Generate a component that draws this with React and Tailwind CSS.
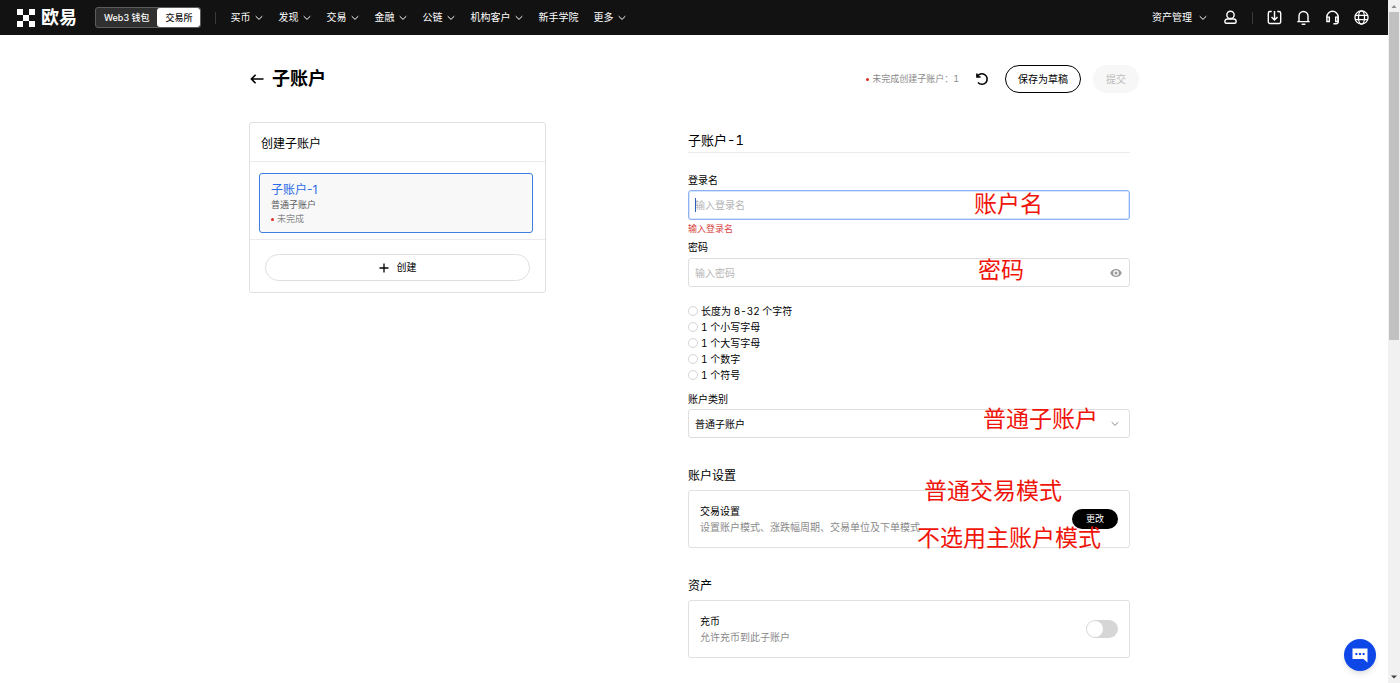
import React, { useState } from 'react'
import { clsx } from 'clsx'

const NAV_ITEMS = [
  { label: '买币', menu: true },
  { label: '发现', menu: true },
  { label: '交易', menu: true },
  { label: '金融', menu: true },
  { label: '公链', menu: true },
  { label: '机构客户', menu: true },
  { label: '新手学院', menu: false },
  { label: '更多', menu: true },
]

const PASSWORD_RULES = [
  { label: '长度为 8-32 个字符', test: v => v.length >= 8 && v.length <= 32 },
  { label: '1 个小写字母', test: v => /[a-z]/.test(v) },
  { label: '1 个大写字母', test: v => /[A-Z]/.test(v) },
  { label: '1 个数字', test: v => /\d/.test(v) },
  { label: '1 个符号', test: v => /[^a-zA-Z0-9]/.test(v) },
]

function Icon({ size = 16, children, className, strokeWidth = 1.5 }) {
  return (
    <svg
      width={size}
      height={size}
      viewBox="0 0 16 16"
      fill="none"
      stroke="currentColor"
      strokeWidth={strokeWidth}
      className={clsx('shrink-0', className)}
      aria-hidden="true"
    >
      {children}
    </svg>
  )
}

function Chevron({ className }) {
  return (
    <svg width="8" height="8" viewBox="0 0 8 8" fill="none" stroke="currentColor" className={clsx('shrink-0', className)} aria-hidden="true">
      <path d="M0.7 2.2 L4 5.4 L7.3 2.2" />
    </svg>
  )
}

function Note({ className, children }) {
  return (
    <span className={clsx('absolute z-10 text-[23px] leading-6 text-[#f0150a] whitespace-nowrap pointer-events-none', className)}>
      {children}
    </span>
  )
}

function Logo() {
  return (
    <a href="#" className="flex items-center gap-1.5 text-white">
      <svg width="18" height="18" viewBox="0 0 18 18" fill="currentColor" aria-hidden="true">
        <path d="M0 0h6v6H0zM12 0h6v6h-6zM6 6h6v6H6zM0 12h6v6H0zM12 12h6v6h-6z" />
      </svg>
      <span className="text-lg leading-5 font-bold">欧易</span>
    </a>
  )
}

function TopBar() {
  return (
    <header className="flex items-center h-[35px] pl-[17px] pr-[19px] bg-[#121212] text-white text-[10px]">
      <Logo />
      <div className="flex items-center h-[21px] ml-[18px] rounded-[3px] border border-[#5c5c5c] bg-[#303030] text-[9px] font-medium">
        <button type="button" className="px-2 h-full">Web3 钱包</button>
        <button type="button" className="px-2 h-full rounded-[3px] bg-white text-[#121212]">交易所</button>
      </div>
      <div className="w-px h-3 mx-[14px] bg-[#3a3a3a]" />
      <nav className="flex items-center gap-[15px]">
        {NAV_ITEMS.map(item => (
          <a key={item.label} href="#" className="flex items-center gap-[5px]">
            {item.label}
            {item.menu && <Chevron />}
          </a>
        ))}
      </nav>

      <div className="flex items-center gap-[14px] ml-auto">
        <a href="#" className="flex items-center gap-[7px]">
          资产管理
          <Chevron />
        </a>
        <button type="button" aria-label="用户" className="ml-0.5">
          <Icon size={15}>
            <circle cx="8" cy="5.2" r="3.9" />
            <path d="M4.600 9.600h6.800a2.600 2.600 0 0 1 2.600 2.600v.4a1.600 1.600 0 0 1-1.600 1.600H3.600A1.600 1.600 0 0 1 2 12.600v-.4a2.600 2.600 0 0 1 2.600-2.600z" />
          </Icon>
        </button>
        <div className="w-px h-3 bg-[#3a3a3a]" />
        <button type="button" aria-label="下载">
          <Icon size={15}>
            <path d="M5 1.6H3.2a1.8 1.8 0 0 0-1.8 1.8v9.2a1.8 1.8 0 0 0 1.8 1.8h9.6a1.8 1.8 0 0 0 1.8-1.8V3.4a1.8 1.8 0 0 0-1.8-1.8H11" />
            <path d="M8 1v9.6M4.8 7.4L8 10.6l3.2-3.2" />
          </Icon>
        </button>
        <button type="button" aria-label="通知">
          <Icon size={15}>
            <path d="M3.2 12.2V6.4a4.8 4.8 0 0 1 9.6 0v5.8M1.4 12.4h13.2" />
            <path d="M6 15.2h4" />
          </Icon>
        </button>
        <button type="button" aria-label="客服">
          <Icon size={15}>
            <path d="M2 7.4a6 6 0 0 1 12 0v5a2.2 2.2 0 0 1-2.2 2.2H9" />
            <path d="M2 7.6h2.6v4.6H2zM11.4 7.6H14v4.6h-2.6z" />
          </Icon>
        </button>
        <button type="button" aria-label="语言">
          <Icon size={15} strokeWidth={1.4}>
            <circle cx="8" cy="8" r="7" />
            <ellipse cx="8" cy="8" rx="3.2" ry="7" />
            <path d="M1.4 5.8h13.2M1.4 10.2h13.2" />
          </Icon>
        </button>
      </div>
    </header>
  )
}

function TitleRow() {
  return (
    <div className="flex items-center h-7 text-[10px]">
      <a href="#" aria-label="返回" className="ml-px">
        <svg width="14" height="12" viewBox="0 0 14 12" fill="none" stroke="currentColor" strokeWidth="1.6" aria-hidden="true">
          <path d="M13.5 6H1.4M5.6 1.8L1.4 6l4.2 4.2" />
        </svg>
      </a>
      <h1 className="ml-2 text-lg leading-6 font-bold">子账户</h1>
      <div className="flex items-center ml-auto">
        <span className="w-[3px] h-[3px] mr-[3px] rounded-full bg-[#d92d20]" />
        <span className="text-[9px] text-[#8a8a8a]">未完成创建子账户：</span>
        <span className="text-[9px] text-[#8a8a8a] tabular-nums">1</span>
        <button type="button" aria-label="重置" className="ml-4">
          <Icon size={14} strokeWidth={1.8}>
            <path d="M2.2 1.6v4.2h4.2M2.4 5.6A6 6 0 1 1 3.4 12" />
          </Icon>
        </button>
        <button type="button" className="h-7 ml-4 px-3 rounded-full border border-black">
          保存为草稿
        </button>
        <button type="button" disabled className="h-7 ml-3 px-[13px] rounded-full bg-[#f7f7f7] text-[#bdbdbd]">
          提交
        </button>
      </div>
    </div>
  )
}

function AccountList() {
  return (
    <section className="w-[297px] shrink-0 rounded-[3px] border border-[#e0e0e0]">
      <h2 className="px-[11px] pt-[11px] pb-[7px] text-xs leading-5 border-b border-[#ebebeb]">创建子账户</h2>
      <div className="pl-[9px] pr-3 pt-[11px] pb-1.5 border-b border-[#ebebeb]">
        <button
          type="button"
          className="block w-full px-[11px] pt-2 pb-1.5 text-left rounded-[3px] border border-[#3b7fe0] bg-[#f8f8f8]"
        >
          <span className="block text-xs leading-4 text-[#2b6be8]">子账户-1</span>
          <span className="block text-[9px] leading-[14px] text-[#5c5c5c]">普通子账户</span>
          <span className="flex items-center gap-[3px] text-[9px] leading-[14px] text-[#8a8a8a]">
            <span className="w-[3px] h-[3px] rounded-full bg-[#d92d20]" />
            未完成
          </span>
        </button>
      </div>
      <div className="px-[15px] pt-[14px] pb-[11px]">
        <button
          type="button"
          className="flex items-center justify-center gap-2 w-full h-[27px] rounded-full border border-[#dedede] text-[10px]"
        >
          <svg width="10" height="10" viewBox="0 0 10 10" stroke="currentColor" strokeWidth="1.3" aria-hidden="true">
            <path d="M5 0.5v9M0.5 5h9" />
          </svg>
          创建
        </button>
      </div>
    </section>
  )
}

function AccountForm() {
  const [name, setName] = useState('')
  const [password, setPassword] = useState('')
  const [visible, setVisible] = useState(false)
  const [deposit, setDeposit] = useState(false)

  return (
    <form className="w-[442px] mr-[9px] pt-2 text-[10px] leading-4" onSubmit={e => e.preventDefault()}>
      <h2 className="pb-0.5 text-[13px] leading-5 tabular-nums border-b border-[#ebebeb]">子账户-1</h2>

      {/* Login name */}
      <label htmlFor="login" className="block mt-[19px]">登录名</label>
      <div className="relative mt-0.5">
        <input
          id="login"
          type="text"
          value={name}
          onChange={e => setName(e.target.value)}
          placeholder="输入登录名"
          className="block w-full h-[30px] px-1.5 rounded-[3px] border border-[#8fb3f2] ring-1 ring-inset ring-[#d6e4fd] outline-none placeholder:text-[#b5b5b5]"
        />
        {!name && <span className="absolute left-[7px] top-2 w-px h-3.5 bg-[#2b5fb8]" />}
        <Note className="right-[87px] top-0.5">账户名</Note>
      </div>
      <p className="mt-px text-[9px] text-[#d64541]">输入登录名</p>

      {/* Password */}
      <label htmlFor="password" className="block mt-0.5">密码</label>
      <div className="relative mt-[3px]">
        <input
          id="password"
          type={visible ? 'text' : 'password'}
          value={password}
          onChange={e => setPassword(e.target.value)}
          placeholder="输入密码"
          className="block w-full h-[29px] pl-1.5 pr-7 rounded-[3px] border border-[#dedede] outline-none placeholder:text-[#b5b5b5]"
        />
        <button
          type="button"
          aria-label="显示密码"
          onClick={() => setVisible(!visible)}
          className="absolute right-2 inset-y-0 text-[#9c9c9c]"
        >
          <svg width="12" height="12" viewBox="0 0 12 12" aria-hidden="true">
            <path
              fill="currentColor"
              fillRule="evenodd"
              d="M6 2C3.4 2 1.2 3.6.2 6c1 2.400 3.200 4 5.800 4s4.800-1.600 5.800-4C10.800 3.600 8.600 2 6 2zm0 1.200a2.800 2.800 0 1 1 0 5.600 2.800 2.800 0 0 1 0-5.600zm0 1.300a1.500 1.500 0 1 0 0 3 1.500 1.500 0 0 0 0-3z"
            />
          </svg>
        </button>
        <Note className="right-[106px] top-0">密码</Note>
      </div>
      <ul className="mt-4 tabular-nums">
        {PASSWORD_RULES.map(rule => (
          <li key={rule.label}>
            <label className="flex items-center gap-[3px]">
              <input
                type="checkbox"
                readOnly
                checked={rule.test(password)}
                className="appearance-none w-2.5 h-2.5 rounded-full border border-[#d6d6d6] checked:bg-[#31bd65]"
              />
              {rule.label}
            </label>
          </li>
        ))}
      </ul>

      {/* Account type */}
      <label htmlFor="type" className="block mt-2">账户类别</label>
      <div className="relative mt-0.5">
        <select
          id="type"
          className="block appearance-none w-full h-[29px] px-1.5 rounded-[3px] border border-[#dedede] bg-white outline-none"
        >
          <option>普通子账户</option>
        </select>
        <Chevron className="absolute right-[11px] top-[11px] text-[#8a8a8a] pointer-events-none" />
        <Note className="right-8 -top-0.5">普通子账户</Note>
      </div>

      <h3 className="mt-7 text-xs leading-5">账户设置</h3>
      <div className="relative flex items-center justify-between mt-1 px-[11px] py-3 rounded-[3px] border border-[#e0e0e0]">
        <div>
          <p>交易设置</p>
          <p className="text-[#8a8a8a]">设置账户模式、涨跌幅周期、交易单位及下单模式</p>
        </div>
        <button type="button" className="h-5 px-[14px] rounded-full bg-black text-white text-[9px] leading-5">
          更改
        </button>
        <Note className="right-[67px] -top-3">普通交易模式</Note>
        <Note className="right-7 top-[35px]">不选用主账户模式</Note>
      </div>

      <h3 className="mt-7 text-xs leading-5">资产</h3>
      <div className="flex items-center justify-between mt-1 px-[11px] py-3 rounded-[3px] border border-[#e0e0e0]">
        <label htmlFor="deposit">
          <span className="block">充币</span>
          <span className="block text-[#8a8a8a]">允许充币到此子账户</span>
        </label>
        <input
          id="deposit"
          type="checkbox"
          role="switch"
          checked={deposit}
          onChange={e => setDeposit(e.target.checked)}
          className="appearance-none flex items-center w-8 h-[18px] px-px rounded-full bg-[#d6d6d6] checked:bg-black before:w-4 before:h-4 before:rounded-full before:bg-white checked:justify-end"
        />
      </div>
    </form>
  )
}

function ScrollTrack() {
  return (
    <div className="flex flex-col items-center w-3 shrink-0 bg-[#f1f1f1]" aria-hidden="true">
      <svg width="12" height="12" viewBox="0 0 12 12" fill="#8a8a8a">
        <path d="M3.500 8L6 5l2.500 3z" />
      </svg>
      <div className="w-2.5 h-[48%] bg-[#c1c1c1]" />
      <svg width="12" height="12" viewBox="0 0 12 12" fill="#404040" className="mt-auto">
        <path d="M3 4.500h6L6 7.500z" />
      </svg>
    </div>
  )
}

export default function App() {
  return (
    <div className="flex h-screen overflow-hidden bg-white text-black font-['Inter','Noto_Sans_CJK_SC',sans-serif]">
      <div className="relative flex-1 min-w-0 overflow-hidden">
        <TopBar />
        <main className="max-w-[890px] mx-auto pt-[30px]">
          <TitleRow />
          <div className="flex items-start justify-between mt-[29px]">
            <AccountList />
            <AccountForm />
          </div>
        </main>
        <button
          type="button"
          aria-label="在线客服"
          className="absolute right-3 bottom-3 flex items-center justify-center w-8 h-8 rounded-full bg-[#0d47e8] shadow-md"
        >
          <svg width="16" height="16" viewBox="0 0 16 16" aria-hidden="true">
            <path d="M0.500 1.500h15v14l-4-3.500h-11z" fill="#fff" />
            <path d="M3.400 5.900h2v2h-2zM7 5.900h2v2H7zM10.600 5.900h2v2h-2z" fill="#0d47e8" />
          </svg>
        </button>
      </div>
      <ScrollTrack />
    </div>
  )
}
